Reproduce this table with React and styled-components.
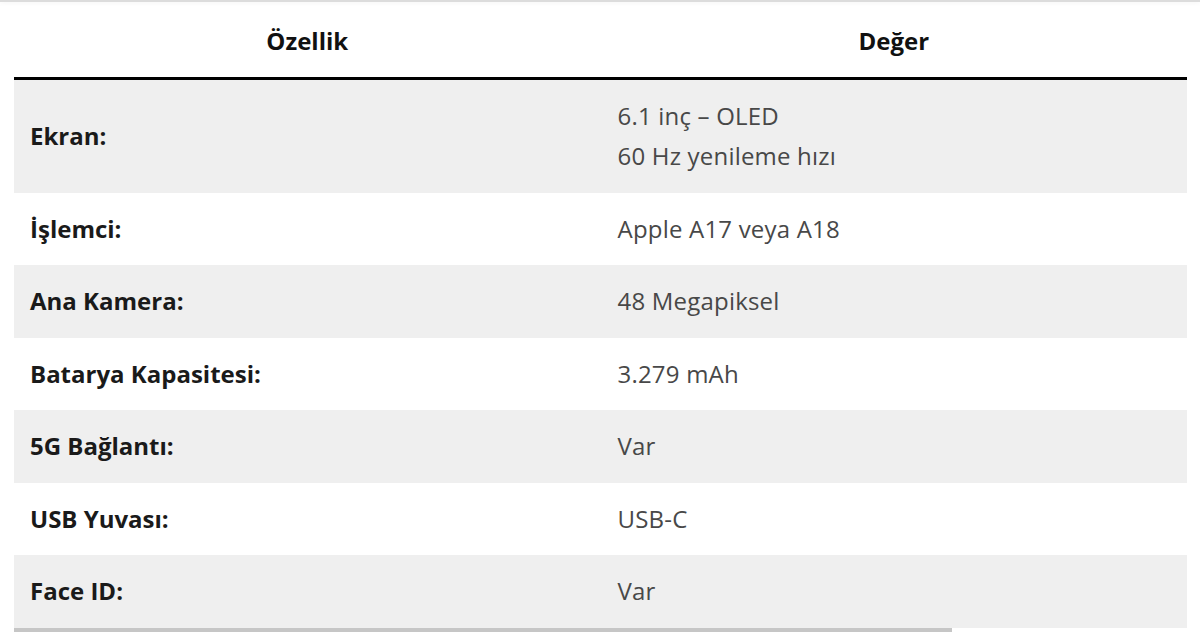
import React from 'react';
import styled, { createGlobalStyle } from 'styled-components';

const GlobalStyle = createGlobalStyle`
    body {
        margin: 0;
        background: #ffffff;
        font-family: "Open Sans", "Noto Sans", sans-serif;
    }`;

const TopEdge = styled.div`
    height: 2px;
    background-color: #dcdcdc;
    box-shadow: 0 1px 4px rgba(0, 0, 0, 0.06);
    margin-bottom: 4px;`;

const Wrapper = styled.div`
    padding: 0 13px 0 14px;`;

const SpecTable = styled.table`
    width: 100%;
    table-layout: fixed;
    border-collapse: collapse;
    font-size: 24px;
    line-height: 40px;`;

const HeadCell = styled.th`
    text-align: center;
    font-weight: 700;
    color: #111111;
    padding: 15px 16px 16px;
    border-bottom: 3px solid #000000;`;

const Row = styled.tr`
    background-color: ${props => (props.$shaded ? '#efefef' : '#ffffff')};`;

const LabelCell = styled.td`
    padding: 16px 16px 16.5px;
    font-weight: 700;
    color: #1a1a1a;
    vertical-align: middle;`;

const ValueCell = styled.td`
    padding: 16px 17px 16.5px;
    color: #484848;
    letter-spacing: 0.2px;
    vertical-align: middle;`;

const ScrollTrack = styled.div`
    height: 4px;`;

const ScrollThumb = styled.div`
    height: 100%;
    width: 80%;
    background-color: #c6c6c6;`;

const specs = [
    { label: 'Ekran:', value: ['6.1 inç – OLED', '60 Hz yenileme hızı'] },
    { label: 'İşlemci:', value: ['Apple A17 veya A18'] },
    { label: 'Ana Kamera:', value: ['48 Megapiksel'] },
    { label: 'Batarya Kapasitesi:', value: ['3.279 mAh'] },
    { label: '5G Bağlantı:', value: ['Var'] },
    { label: 'USB Yuvası:', value: ['USB-C'] },
    { label: 'Face ID:', value: ['Var'] },
];

const App = () => {
    return (
        <>
            <GlobalStyle />
            <TopEdge />
            <Wrapper>
                <SpecTable>
                    <thead>
                        <tr>
                            <HeadCell>Özellik</HeadCell>
                            <HeadCell>Değer</HeadCell>
                        </tr>
                    </thead>
                    <tbody>
                        {specs.map((spec, i) => (
                            <Row key={spec.label} $shaded={i % 2 === 0}>
                                <LabelCell>{spec.label}</LabelCell>
                                <ValueCell>
                                    {spec.value.map((line, j) => (
                                        <React.Fragment key={line}>
                                            {j > 0 && <br />}
                                            {line}
                                        </React.Fragment>
                                    ))}
                                </ValueCell>
                            </Row>
                        ))}
                    </tbody>
                </SpecTable>
                <ScrollTrack>
                    <ScrollThumb />
                </ScrollTrack>
            </Wrapper>
        </>
    );
}
export default App;
